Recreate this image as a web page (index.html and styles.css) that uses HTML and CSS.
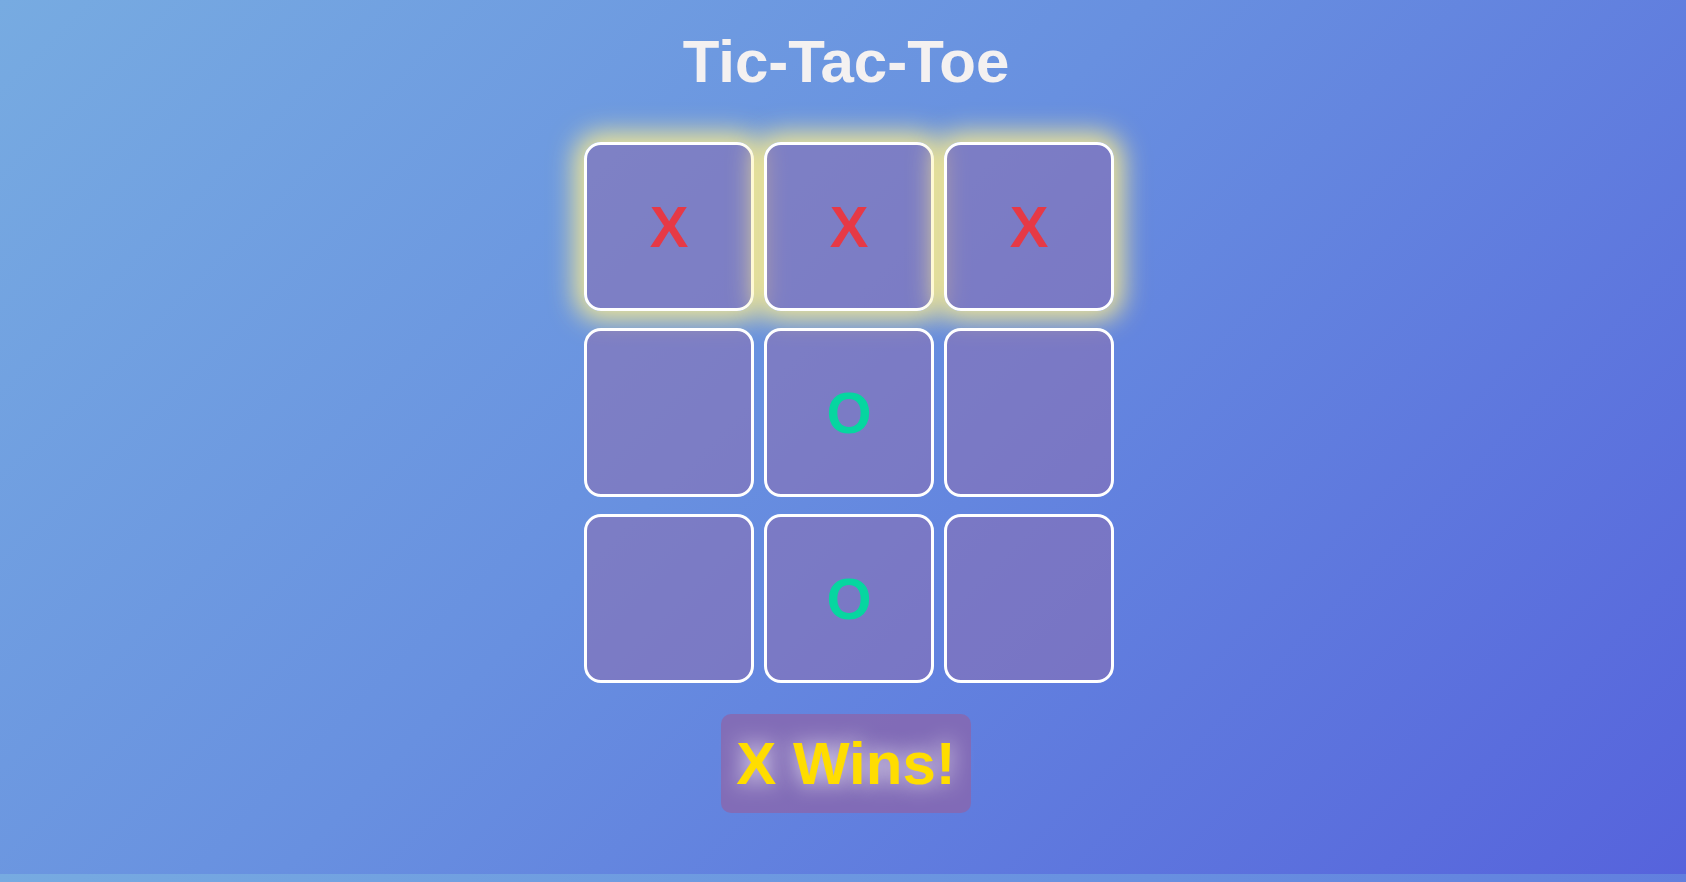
FILE: index.html
```html
<!DOCTYPE html>
<html lang="en">
<head>
<meta charset="utf-8">
<title>Tic-Tac-Toe</title>
<link rel="stylesheet" href="styles.css">
</head>
<body>
  <h1 class="title">Tic-Tac-Toe</h1>
  <div class="board">
    <div class="cell win x">X</div>
    <div class="cell win x">X</div>
    <div class="cell win x">X</div>
    <div class="cell"></div>
    <div class="cell o">O</div>
    <div class="cell"></div>
    <div class="cell"></div>
    <div class="cell o">O</div>
    <div class="cell"></div>
  </div>
  <div class="status">X Wins!</div>
</body>
</html>
```
FILE: styles.css
```css
body {
  margin: 0;
  padding: 28px 0 61px 6px;
  display: flex;
  flex-direction: column;
  align-items: center;
  font-family: "Liberation Sans", Arial, sans-serif;
  background: linear-gradient(135deg, #77abe1 0%, #6890e0 45%, #5663dc 100%);
}

.title {
  margin: 0 0 47px;
  font-size: 60px;
  font-weight: bold;
  color: #f4f1f1;
  line-height: 1.117;
}

.board {
  display: grid;
  grid-template-columns: repeat(3, 170px);
  grid-auto-rows: 169px;
  column-gap: 10px;
  row-gap: 17px;
  margin-left: 6px;
}

.cell {
  box-sizing: border-box;
  border: 3px solid #ffffff;
  border-radius: 17px;
  background: rgba(140, 110, 175, 0.55);
  display: flex;
  align-items: center;
  justify-content: center;
  font-size: 58px;
  font-weight: bold;
}

.cell.x { color: #e63946; }
.cell.o { color: #06d6a0; }

.cell.win {
  box-shadow: 0 0 26px 9px rgba(255, 240, 140, 0.9);
}

.status {
  margin-top: 31px;
  padding: 16px 15px;
  border-radius: 10px;
  background: rgba(140, 100, 170, 0.75);
  color: #ffdd00;
  font-size: 60px;
  font-weight: bold;
  line-height: 1.117;
  text-shadow: 0 0 22px rgba(255, 255, 255, 0.9);
}
```
